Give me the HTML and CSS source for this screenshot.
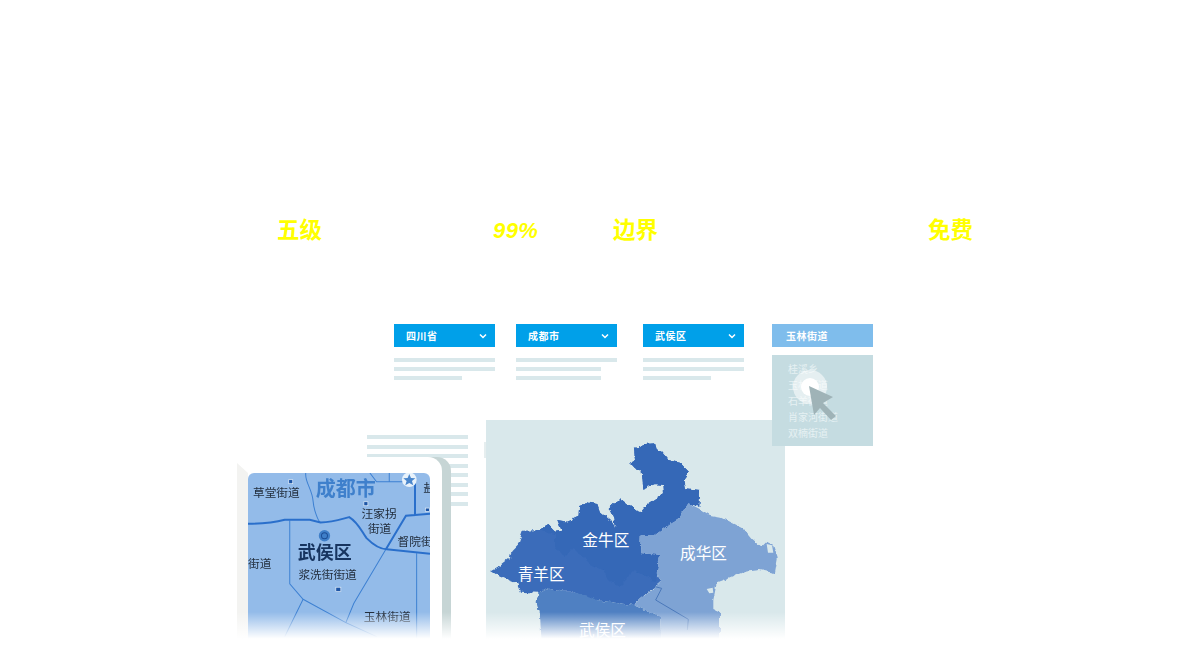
FILE: index.html
```html
<!DOCTYPE html>
<html lang="zh-CN">
<head>
<meta charset="utf-8">
<title>行政区划</title>
<link rel="stylesheet" href="styles.css">
</head>
<body>
<main class="stage">
  <span class="tag tag-a">五级</span>
  <span class="tag tag-b">99%</span>
  <span class="tag tag-c">边界</span>
  <span class="tag tag-d">免费</span>

  <section class="picker picker-1">
    <div class="select"><span>四川省</span><svg class="chev" viewBox="0 0 8 6"><path d="M1 1.5 4 4.5 7 1.5"/></svg></div>
    <div class="bars"><i class="full"></i><i class="full"></i><i class="short"></i></div>
  </section>
  <section class="picker picker-2">
    <div class="select"><span>成都市</span><svg class="chev" viewBox="0 0 8 6"><path d="M1 1.5 4 4.5 7 1.5"/></svg></div>
    <div class="bars"><i class="full"></i><i class="mid"></i><i class="mid"></i></div>
  </section>
  <section class="picker picker-3">
    <div class="select"><span>武侯区</span><svg class="chev" viewBox="0 0 8 6"><path d="M1 1.5 4 4.5 7 1.5"/></svg></div>
    <div class="bars"><i class="full"></i><i class="full"></i><i class="short"></i></div>
  </section>

  <div class="back-lines"><i></i><i></i><i></i><i></i><i></i><i></i><i></i><i></i></div>
  <div class="stub"></div>

  <svg class="district-map" viewBox="18 30 897 660">
    <defs>
      <filter id="rough" x="-5%" y="-5%" width="110%" height="110%">
        <feTurbulence type="fractalNoise" baseFrequency=".045" numOctaves="3" seed="4"/>
        <feDisplacementMap in="SourceGraphic" scale="16" xChannelSelector="R" yChannelSelector="G"/>
      </filter>
    </defs>
    <rect x="18" y="30" width="897" height="660" fill="#d9e8eb"/>
    <g filter="url(#rough)">
      <path fill="#3a6cba" d="M33 483 60 468 90 445 95 420 115 400 128 362 180 360 205 345 225 365 245 362 232 330 262 335 295 320 298 285 318 277 352 282 360 305 390 330 405 355 400 320 388 295 420 265 445 285 480 310 500 285 530 265 552 250 550 225 525 222 490 236 485 185 465 175 450 158 465 150 462 115 490 103 525 100 530 118 545 125 565 150 600 158 628 187 610 210 615 235 660 240 658 290 625 280 600 320 565 345 525 375 485 375 483 430 540 435 530 490 545 510 460 585 360 572 330 565 280 545 250 545 200 535 175 548 120 545 110 520 60 500Z"/>
      <path fill="#3467b7" d="M180 360 205 345 225 365 245 362 232 330 262 335 295 320 298 285 318 277 352 282 360 305 390 330 405 355 400 320 388 295 420 265 445 285 480 310 500 285 530 265 552 250 550 225 525 222 490 236 485 185 465 175 450 158 465 150 462 115 490 103 525 100 530 118 545 125 565 150 600 158 628 187 610 210 615 235 660 240 658 290 625 280 600 320 565 345 525 375 485 375 483 430 540 435 530 490 528 515 490 495 460 480 420 530 390 510 370 480 330 465 310 440 280 415 250 440 225 410 225 375Z"/>
      <path fill="#5080c2" d="M175 548 200 535 250 545 280 545 330 560 360 572 460 585 540 620 545 700 185 700 180 620 170 580Z"/>
      <path fill="#7ea3d4" d="M625 280 655 295 690 315 720 320 770 345 790 355 815 385 845 410 860 395 880 405 893 445 885 490 840 480 795 485 750 505 710 520 700 570 700 600 720 610 720 700 545 700 540 620 460 585 525 530 545 510 530 490 540 435 483 430 485 375 525 375 565 345 600 320Z"/>
    </g>
    <path fill="#d9e8eb" d="M680 537 698 533 700 548 688 550Z M860 402 876 406 880 428 864 428Z"/>
    <path fill="none" stroke="#4a78ba" stroke-width="3" d="M525 530 545 535 527 570 625 628 622 660"/>
    <text class="dist-label" x="307" y="408">金牛区</text>
    <text class="dist-label" x="600" y="446">成华区</text>
    <text class="dist-label" x="113" y="511">青羊区</text>
    <text class="dist-label" x="297" y="677">武侯区</text>
  </svg>

  <div class="card">
    <svg class="street-map" viewBox="55 100 545 500">
      <rect x="55" y="100" width="545" height="500" fill="#93bbe9"/>
      <g class="road-thin">
        <path d="M228 100C224 125 248 150 250 185 252 210 265 245 272 248"/>
        <path d="M420 100 440 126H555M478 100V126"/>
        <path d="M180 242V432L220 478 348 548 372 490 468 328"/>
        <path d="M220 478 165 590M348 548 440 590M560 340V600"/>
      </g>
      <g class="road-main">
        <path d="M55 252C100 252 130 250 165 240H240L272 248C310 248 335 238 358 232 385 248 395 275 410 295 430 315 450 328 470 328L600 342"/>
        <path d="M468 328 528 228 600 222M528 228 555 226V126"/>
      </g>
      <circle cx="284" cy="288" r="17" fill="#3f7fc9"/>
      <circle cx="284" cy="288" r="9" fill="none" stroke="#1d4f97" stroke-width="3"/>
      <rect x="177" y="120" width="12" height="12" class="dot"/>
      <rect x="402" y="186" width="12" height="12" class="dot"/>
      <rect x="318" y="442" width="15" height="13" class="dot"/>
      <rect x="586" y="205" width="12" height="10" class="dot"/>
      <text class="city" x="258" y="168">成都市</text>
      <text class="street" x="70" y="172">草堂街道</text>
      <text class="street" x="395" y="236">汪家拐</text>
      <text class="street" x="414" y="280">街道</text>
      <text class="street" x="503" y="320">督院街</text>
      <text class="street" x="55" y="385">街道</text>
      <text class="street" x="206" y="418">浆洗街街道</text>
      <text class="street" x="402" y="544">玉林街道</text>
      <text class="street" x="580" y="158">盐</text>
      <text class="area" x="204" y="358">武侯区</text>
      <circle cx="538" cy="120" r="22" fill="#e8f2fb"/>
      <path fill="#4a86cc" d="M538 103 543 115 556 116 546 124 550 137 538 130 526 137 530 124 520 116 533 115Z"/>
    </svg>
  </div>

  <section class="picker picker-4">
    <div class="select select-open"><span>玉林街道</span></div>
    <ul class="options">
      <li>桂溪乡</li>
      <li>玉林街道</li>
      <li>石羊街道</li>
      <li>肖家河街道</li>
      <li>双楠街道</li>
    </ul>
  </section>

  <svg class="pointer" viewBox="0 0 50 50">
    <circle cx="18" cy="18" r="17" fill="#fff" fill-opacity=".55"/>
    <circle cx="18" cy="18" r="9" fill="#fff"/>
    <path fill="#9fb3b7" d="M17 17 41 28 31 34 44 47 39 51 28 39 22 46Z"/>
  </svg>

  <div class="fade"></div>
</main>
</body>
</html>
```

FILE: styles.css
```css
html, body {
  margin: 0;
  padding: 0;
  background: #fff;
}

.stage {
  position: relative;
  width: 1200px;
  height: 670px;
  overflow: hidden;
  font-family: "Noto Sans CJK SC", "Noto Sans", sans-serif;
}

.tag {
  position: absolute;
  top: 212px;
  color: #ffff00;
  font-size: 22.5px;
  line-height: 32px;
  font-weight: 700;
}
.tag-a { left: 277px; }
.tag-b { left: 493px; top: 215px; font-style: italic; font-family: "Liberation Sans", sans-serif; font-size: 22px; letter-spacing: .4px; }
.tag-c { left: 613px; }
.tag-d { left: 928px; }

.picker {
  position: absolute;
  top: 324px;
  width: 101px;
  display: flex;
  flex-direction: column;
}
.picker-1 { left: 394px; }
.picker-2 { left: 516px; }
.picker-3 { left: 643px; }
.picker-4 { left: 772px; z-index: 3; }

.select {
  height: 23px;
  box-sizing: border-box;
  padding: 0 8px 0 12px;
  display: flex;
  align-items: center;
  justify-content: space-between;
  background: #00a0e9;
  color: #fff;
  font-size: 10px;
  font-weight: 700;
  letter-spacing: .5px;
}
.select-open {
  background: #7fbdec;
  padding-left: 14px;
}

.chev {
  width: 8px;
  height: 6px;
  fill: none;
  stroke: #fff;
  stroke-width: 1.5;
}

.bars {
  margin-top: 11px;
  display: flex;
  flex-direction: column;
  gap: 5px;
}
.bars i {
  display: block;
  height: 4px;
  background: #d9e8eb;
}
.bars .full { width: 101px; }
.bars .mid { width: 85px; }
.bars .short { width: 68px; }

.options {
  list-style: none;
  margin: 8px 0 0;
  padding: 6px 0 6px 16px;
  height: 79px;
  background: #c5dce1;
  color: #e6f1f3;
  font-size: 10px;
  line-height: 16px;
}

.back-lines {
  position: absolute;
  left: 367px;
  top: 435px;
  width: 101px;
  display: flex;
  flex-direction: column;
  gap: 5.5px;
}
.back-lines i {
  display: block;
  height: 4px;
  background: #d9e8eb;
}

.stub {
  position: absolute;
  left: 484px;
  top: 442px;
  width: 3px;
  height: 16px;
  background: #e6eeef;
}

.district-map {
  position: absolute;
  left: 486px;
  top: 420px;
  width: 299px;
  height: 220px;
}
.dist-label {
  fill: #fff;
  font-size: 47px;
}

.card {
  position: absolute;
  left: 237px;
  top: 457px;
  width: 205px;
  height: 183px;
  box-sizing: border-box;
  padding: 16px 12px 0 11px;
  background: #fff;
  border-top-right-radius: 14px;
  box-shadow: 9px 0 0 #c6d5d5;
}
.card::before {
  content: "";
  position: absolute;
  left: 0;
  top: 6px;
  bottom: 0;
  width: 11px;
  background: #f3f3f1;
  clip-path: polygon(0 0, 100% 10px, 100% 100%, 0 100%);
}
.street-map {
  display: block;
  width: 182px;
  height: 167px;
  border-radius: 6px 6px 0 0;
  filter: blur(.3px);
}
.road-thin path {
  fill: none;
  stroke: #3d80d2;
  stroke-width: 3;
}
.road-main path {
  fill: none;
  stroke: #2a6fcb;
  stroke-width: 6;
}
.dot {
  fill: #1d55a6;
  stroke: #e8f2fb;
  stroke-width: 2;
}
.city {
  fill: #3f80cc;
  font-size: 60px;
  font-weight: 700;
}
.street {
  fill: #1f2a38;
  font-size: 35px;
}
.area {
  fill: #17345f;
  font-size: 54px;
  font-weight: 700;
}

.pointer {
  position: absolute;
  left: 792px;
  top: 369px;
  width: 50px;
  height: 50px;
  overflow: visible;
  z-index: 4;
}

.fade {
  position: absolute;
  left: 230px;
  top: 612px;
  width: 570px;
  height: 29px;
  background: linear-gradient(rgba(255, 255, 255, 0), #fff 92%);
  z-index: 5;
}
```
